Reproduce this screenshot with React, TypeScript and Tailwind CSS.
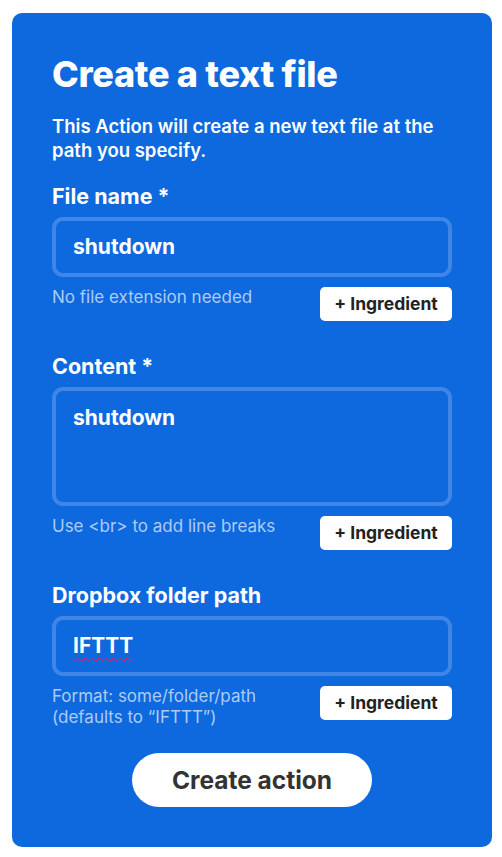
const font = { fontFamily: 'Inter, "Open Sans", sans-serif' };

function IngredientButton() {
  return (
    <button className="shrink-0 h-[34px] w-[132px] rounded-[5px] bg-white text-[17.5px] font-bold text-[#222] flex items-center justify-center">
      + Ingredient
    </button>
  );
}

export default function App() {
  return (
    <div className="min-h-screen bg-white pt-[13px] px-[12px] pb-[10px]" style={font}>
      <div className="w-[480px] rounded-[10px] bg-[#0e68de] px-[40px] pt-[39px] pb-[40px] text-white">
        <h1 className="text-[36px] font-extrabold leading-[44px] tracking-[-0.3px]">Create a text file</h1>
        <p className="mt-[18px] text-[18.5px] font-semibold leading-[24px]">
          This Action will create a new text file at the path you specify.
        </p>

        {/* File name */}
        <div className="mt-[20px] text-[21.5px] font-bold leading-[28px]">File name *</div>
        <div className="mt-[7px] h-[60px] rounded-[11px] border-[4px] border-[#3f86e6] flex items-center px-[17px] text-[21px] font-bold">
          shutdown
        </div>
        <div className="mt-[10px] flex items-start justify-between">
          <span className="text-[17px] leading-[21px] text-[#acccf6]">No file extension needed</span>
          <IngredientButton />
        </div>

        {/* Content */}
        <div className="mt-[31px] text-[21.5px] font-bold leading-[28px]">Content *</div>
        <div className="mt-[7px] h-[119px] rounded-[11px] border-[4px] border-[#3f86e6] px-[17px] pt-[13px] text-[21px] font-bold leading-[28px]">
          shutdown
        </div>
        <div className="mt-[10px] flex items-start justify-between">
          <span className="text-[17px] leading-[21px] text-[#acccf6]">Use &lt;br&gt; to add line breaks</span>
          <IngredientButton />
        </div>

        {/* Dropbox folder path */}
        <div className="mt-[31px] text-[21.5px] font-bold leading-[28px]">Dropbox folder path</div>
        <div className="mt-[7px] h-[60px] rounded-[11px] border-[4px] border-[#3f86e6] flex items-center px-[17px] text-[21px] font-bold">
          <span className="underline decoration-wavy decoration-[#e0245e] decoration-1 underline-offset-[4px]">IFTTT</span>
        </div>
        <div className="mt-[10px] flex items-start justify-between">
          <span className="text-[17px] leading-[21px] text-[#acccf6]">
            Format: some/folder/path
            <br />
            (defaults to “IFTTT”)
          </span>
          <IngredientButton />
        </div>

        <div className="mt-[25px] flex justify-center">
          <button className="h-[54px] w-[240px] rounded-full bg-white text-[24.5px] font-bold text-[#333]">
            Create action
          </button>
        </div>
      </div>
    </div>
  );
}
